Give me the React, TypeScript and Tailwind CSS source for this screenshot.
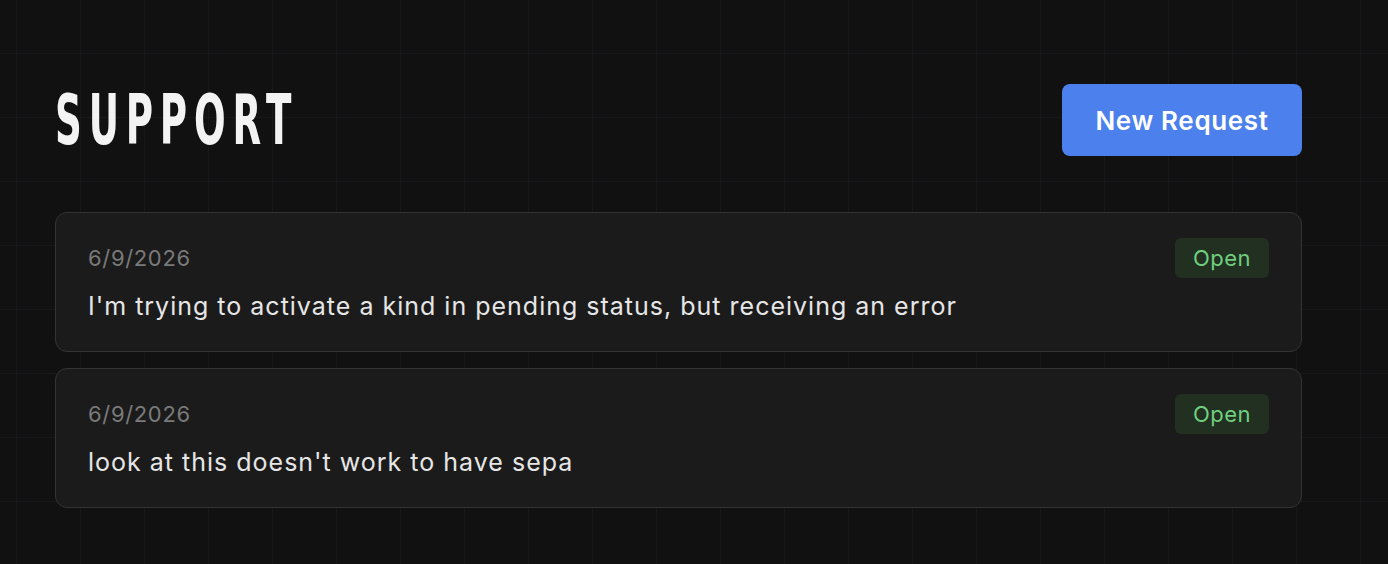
const tickets = [
  { date: "6/9/2026", text: "I'm trying to activate a kind in pending status, but receiving an error", status: "Open" },
  { date: "6/9/2026", text: "look at this doesn't work to have sepa", status: "Open" },
];

export default function App() {
  return (
    <div className="min-h-[564px] bg-[#111111] bg-[linear-gradient(to_right,#17171c_1px,transparent_1px),linear-gradient(to_bottom,#17171c_1px,transparent_1px)] bg-[size:64px_64px] bg-[position:16px_53px] pl-[55px] pt-[84px] font-['Inter','Liberation_Sans',sans-serif]">
      <div className="w-[1247px]">
        {/* Header */}
        <div className="flex items-center justify-between">
          <h1 className="inline-block origin-left scale-x-[0.6] text-[69px] leading-none font-bold tracking-[0.165em] text-[#f3f3f3] font-['DejaVu_Sans_Condensed','DejaVu_Sans',sans-serif]">
            SUPPORT
          </h1>
          <button className="h-[72px] w-[240px] rounded-lg bg-[#4c80ec] text-[26px] font-semibold tracking-[0.025em] text-white">
            New Request
          </button>
        </div>

        {/* Ticket list */}
        <div className="mt-14 flex flex-col gap-4">
          {tickets.map((t, i) => (
            <div key={i} className="rounded-xl border border-[#333333] bg-[#1b1b1b] px-8 pt-[25px] pb-[27px]">
              <div className="flex items-center justify-between">
                <span className="text-[22px] tracking-[0.03em] text-[#7a7a7a]">{t.date}</span>
                <span className="flex h-10 w-[94px] items-center justify-center rounded-md bg-[#213021] text-[22px] tracking-[0.02em] text-[#6fcf7f]">
                  {t.status}
                </span>
              </div>
              <p className="mt-[10px] text-[25px] leading-[36px] tracking-[0.04em] text-[#e6e6e6]">{t.text}</p>
            </div>
          ))}
        </div>
      </div>
    </div>
  );
}
